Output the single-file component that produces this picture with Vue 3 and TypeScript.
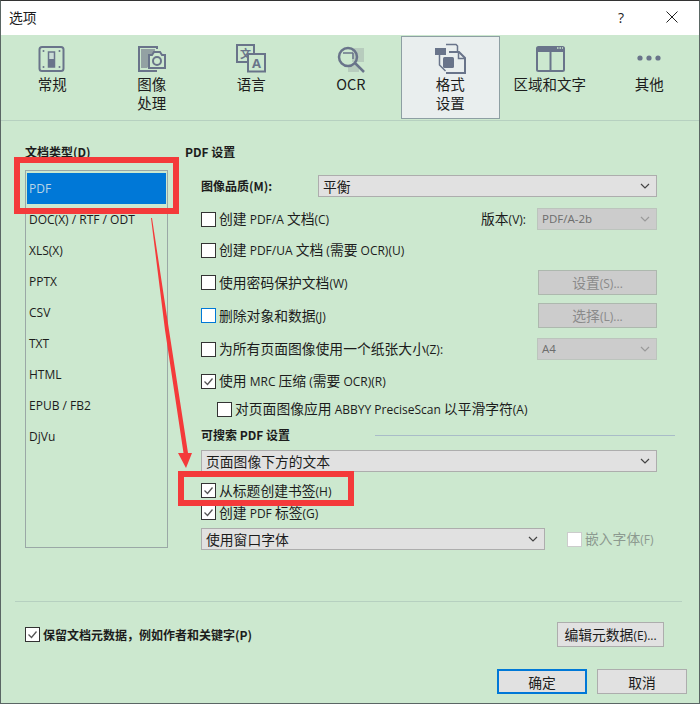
<script setup lang="ts">
const docTypes: string[] = ['DOC(X) / RTF / ODT', 'XLS(X)', 'PPTX', 'CSV', 'TXT', 'HTML', 'EPUB / FB2', 'DjVu']
</script>

<template>
  <div class="window">
    <header class="title">
      <span>选项</span>
      <div class="title-actions">
        <span class="help">?</span>
        <svg class="close" width="12" height="12" viewBox="0 0 12 12"><path d="M.5.5l11 11M11.5.5l-11 11" stroke="#222" fill="none" /></svg>
      </div>
    </header>

    <nav class="tabs">
      <div class="tab">
        <svg class="icon" viewBox="0 0 32 32" fill="none" stroke="#69748a" stroke-width="2">
          <rect x="3.5" y="4" width="24" height="24" rx="2.5" />
          <rect x="12.5" y="9" width="6" height="15" fill="#c9dcd5" stroke-width="1.5" />
          <rect x="13" y="16" width="5" height="8" fill="#69748a" stroke="none" />
          <g fill="#69748a" stroke="none"><circle cx="7.5" cy="8" r="1" /><circle cx="23.5" cy="8" r="1" /><circle cx="7.5" cy="24" r="1" /><circle cx="23.5" cy="24" r="1" /></g>
        </svg>
        <span>常规</span>
      </div>
      <div class="tab">
        <svg class="icon" viewBox="0 0 32 32" fill="none" stroke="#69748a" stroke-width="2">
          <path d="M21 6V4H3v24h18" />
          <path d="M5 6h14v5h-5v11l-3 3H5z" fill="#93a1a3" stroke="none" />
          <path d="M13 12h3l2-3h6l2 3h3v13H13z" fill="#cce8cf" />
          <circle cx="21" cy="18" r="4" />
        </svg>
        <span>图像<br />处理</span>
      </div>
      <div class="tab">
        <svg class="icon" viewBox="0 0 32 32" fill="none" stroke="#69748a" stroke-width="2">
          <rect x="2" y="2" width="17" height="17" />
          <text x="10.5" y="15" class="ig" text-anchor="middle">文</text>
          <rect x="13" y="11" width="17" height="17.500" fill="#cce8cf" />
          <text x="21.500" y="25" class="ia" text-anchor="middle">A</text>
        </svg>
        <span>语言</span>
      </div>
      <div class="tab">
        <svg class="icon" viewBox="0 0 32 32" fill="none" stroke="#69748a" stroke-width="2.500">
          <rect x="17" y="5" width="12" height="14" fill="#b7ccbd" stroke="none" />
          <rect x="13" y="22" width="11" height="7" fill="#b7ccbd" stroke="none" />
          <circle cx="13" cy="14" r="9" />
          <path d="M8 10h10M18 10v6" stroke-width="1.500" />
          <path d="M20 20l9 9" />
        </svg>
        <span>OCR</span>
      </div>
      <div class="tab active">
        <svg class="icon" viewBox="0 0 32 32" fill="none" stroke="#69748a" stroke-width="2">
          <path d="M12 1.500h10l1.500 1.500v5" stroke-width="1.500" />
          <path d="M5.500 12v10l6 6" stroke-width="1.500" />
          <rect x="1" y="5" width="11" height="7" fill="#69748a" stroke="none" />
          <path d="M15 9h10l6 6v15H12" fill="#e9eeee" />
          <path d="M24.500 9v6.500h6.500" stroke-width="1.500" />
          <rect x="9" y="14" width="11" height="11" rx="1.500" fill="#69748a" stroke="none" />
        </svg>
        <span>格式<br />设置</span>
      </div>
      <div class="tab">
        <svg class="icon" viewBox="0 0 32 32" fill="none" stroke="#69748a" stroke-width="2">
          <rect x="3" y="4" width="27" height="24" rx="1.500" />
          <path d="M3 7h27" stroke-width="4" />
          <path d="M16.500 8v20" />
          <path d="M23 5h6" stroke="#cce8cf" stroke-width="1.500" stroke-dasharray="1.500 1" />
        </svg>
        <span>区域和文字</span>
      </div>
      <div class="tab">
        <svg class="icon" viewBox="0 0 32 32" fill="#69748a">
          <circle cx="7" cy="15" r="2.600" /><circle cx="16" cy="15" r="2.600" /><circle cx="25" cy="15" r="2.600" />
        </svg>
        <span>其他</span>
      </div>
    </nav>

    <main class="body">
      <section class="left">
        <h3 class="heading">文档类型(D)</h3>
        <div class="list">
          <div class="item selected la">PDF</div>
          <div v-for="d in docTypes" :key="d" class="item la">{{ d }}</div>
        </div>
      </section>

      <section class="right">
        <h3 class="heading">PDF 设置</h3>
        <div class="rows">
          <div class="row mt14">
            <label class="field-label bold">图像品质(M):</label>
            <div class="select grow"><span>平衡</span><svg class="chev" viewBox="0 0 10 6"><path d="M1 1l4 4 4-4" /></svg></div>
          </div>
          <div class="row mt11">
            <span class="check"></span><span>创建 <span class="la">PDF/A</span> 文档<span class="la">(C)</span></span>
            <span class="end-label">版本<span class="la">(V):</span></span>
            <div class="select off small"><span class="la">PDF/A-2b</span><svg class="chev" viewBox="0 0 10 6"><path d="M1 1l4 4 4-4" /></svg></div>
          </div>
          <div class="row mt9">
            <span class="check"></span><span>创建 <span class="la">PDF/UA</span> 文档 <span class="la">(</span>需要 <span class="la">OCR)(U)</span></span>
          </div>
          <div class="row tall mt9">
            <span class="check"></span><span>使用密码保护文档<span class="la">(W)</span></span>
            <button class="btn off end">设置<span class="la">(S)...</span></button>
          </div>
          <div class="row tall mt8">
            <span class="check focus"></span><span>删除对象和数据<span class="la">(J)</span></span>
            <button class="btn off end">选择<span class="la">(L)...</span></button>
          </div>
          <div class="row mt10">
            <span class="check"></span><span>为所有页面图像使用一个纸张大小<span class="la">(Z):</span></span>
            <div class="select off small end"><span class="la">A4</span><svg class="chev" viewBox="0 0 10 6"><path d="M1 1l4 4 4-4" /></svg></div>
          </div>
          <div class="row mt10">
            <span class="check on"><svg viewBox="0 0 13 13"><path d="M2.500 6.500l3 3 5-6" /></svg></span><span>使用 <span class="la">MRC</span> 压缩 <span class="la">(</span>需要 <span class="la">OCR)(R)</span></span>
          </div>
          <div class="row sub mt6">
            <span class="check"></span><span>对页面图像应用 <span class="la">ABBYY PreciseScan</span> 以平滑字符<span class="la">(A)</span></span>
          </div>
          <div class="section mt6">
            <span class="section-title bold">可搜索 PDF 设置</span>
            <span class="rule"></span>
          </div>
          <div class="row mt6">
            <div class="select grow lift"><span>页面图像下方的文本</span><svg class="chev" viewBox="0 0 10 6"><path d="M1 1l4 4 4-4" /></svg></div>
          </div>
          <div class="row mt7">
            <span class="check on"><svg viewBox="0 0 13 13"><path d="M2.500 6.500l3 3 5-6" /></svg></span><span class="drop">从标题创建书签<span class="la">(H)</span></span>
          </div>
          <div class="row">
            <span class="check on"><svg viewBox="0 0 13 13"><path d="M2.500 6.500l3 3 5-6" /></svg></span><span class="drop">创建 <span class="la">PDF</span> 标签<span class="la">(G)</span></span>
          </div>
          <div class="row mt5">
            <div class="select font"><span>使用窗口字体</span><svg class="chev" viewBox="0 0 10 6"><path d="M1 1l4 4 4-4" /></svg></div>
            <span class="check muted"></span><span class="muted-text">嵌入字体<span class="la">(F)</span></span>
          </div>
        </div>
      </section>
    </main>

    <div class="divider"></div>

    <div class="meta">
      <span class="check on"><svg viewBox="0 0 13 13"><path d="M2.500 6.500l3 3 5-6" /></svg></span>
      <span class="bold small-bold">保留文档元数据，例如作者和关键字(P)</span>
      <button class="btn edit">编辑元数据<span class="la">(E)...</span></button>
    </div>

    <footer class="foot">
      <button class="btn primary">确定</button>
      <button class="btn cancel">取消</button>
    </footer>

    <svg class="marks" width="700" height="704" viewBox="0 0 700 704">
      <rect x="17" y="160" width="159" height="51" fill="none" stroke="#f43a3a" stroke-width="6" />
      <rect x="181" y="474" width="170" height="29" fill="none" stroke="#f43a3a" stroke-width="6" />
      <path d="M151 218H152L169 330L188 453H192L186 468L178 453H183.500L165 330Z" fill="#f43a3a" />
    </svg>
  </div>
</template>

<style>
html, body { margin: 0; padding: 0; }
</style>

<style scoped>
.window {
  position: relative;
  box-sizing: border-box;
  width: 700px;
  height: 704px;
  background: #cce8cf;
  border: 1px solid #5a6664;
  border-top-color: #333;
  font: 13.800px/18px "Noto Sans CJK SC", "Noto Sans", sans-serif;
  color: #1c1c1c;
  overflow: hidden;
}
.la { font-family: "Open Sans", "Noto Sans", sans-serif; font-size: 12px; }
.bold { font-weight: 700; font-size: 12px; }
.drop { padding-top: 2px; }
.lift { padding-bottom: 2px; }
.title {
  box-sizing: border-box;
  height: 34px;
  background: #fff;
  display: flex;
  align-items: center;
  justify-content: space-between;
  padding: 0 0 2px 8px;
}
.title-actions { display: flex; align-items: center; }
.help { font: 14px "Open Sans", sans-serif; margin-right: 42px; }
.close { margin-right: 21px; }
.tabs {
  height: 86px;
  box-sizing: border-box;
  display: flex;
  padding: 1px 0 0 1.500px;
  border-bottom: 1px solid #b6d0c0;
}
.tab {
  box-sizing: border-box;
  width: 99.500px;
  height: 83px;
  display: flex;
  flex-direction: column;
  align-items: center;
  padding-top: 6px;
  font-size: 14.500px;
  line-height: 18.500px;
  text-align: center;
  border: 1px solid transparent;
}
.tab.active { background: #e9eeee; border-color: #8d9fa3; }
.icon { width: 32px; height: 32px; flex: none; }
.ig { font: 11px "Noto Sans CJK SC", sans-serif; fill: #69748a; stroke: none; font-weight: 700; }
.ia { font: 700 13px "Open Sans", sans-serif; fill: #69748a; stroke: none; }
.body { display: flex; height: 480px; padding: 0 0 0 24px; }
.left { width: 160px; flex: none; }
.heading { margin: 22px 0 0; font-size: 12px; line-height: 18px; font-weight: 700; }
.list {
  box-sizing: border-box;
  width: 143px;
  height: 378px;
  margin-top: 9px;
  border: 1px solid #9aa8a6;
  padding: 2px 1px 1px;
}
.item { height: 31px; line-height: 31px; padding-left: 2px; white-space: nowrap; }
.selected { background: #0078d7; color: #b9d6e6; }
.right { width: 500px; flex: none; }
.rows { padding-left: 16px; width: 456px; }
.row { display: flex; align-items: center; height: 22px; white-space: nowrap; }
.row.tall { height: 25px; }
.row.sub { padding-left: 16px; }
.mt5 { margin-top: 5px; } .mt6 { margin-top: 6px; } .mt7 { margin-top: 7px; } .mt8 { margin-top: 8px; }
.mt9 { margin-top: 9px; } .mt10 { margin-top: 10px; } .mt11 { margin-top: 11px; } .mt14 { margin-top: 14px; }
.field-label { width: 117px; flex: none; }
.check {
  box-sizing: border-box;
  flex: none;
  width: 15px;
  height: 15px;
  margin-right: 3px;
  background: #fff;
  border: 1px solid #333;
  display: flex;
}
.check svg { width: 13px; height: 13px; fill: none; stroke: #555; stroke-width: 1.300; }
.check.focus { border-color: #0078d7; }
.check.muted { border-color: #ccc; margin-left: 22px; }
.muted-text { color: #8c9a90; }
.select {
  box-sizing: border-box;
  height: 22px;
  background: #e1e1e1;
  border: 1px solid #adadad;
  display: flex;
  align-items: center;
  justify-content: space-between;
  padding: 0 6px 0 4px;
}
.select.grow { flex: 1; }
.select.font { width: 344px; }
.select.off { background: #ccc; border-color: #bcc4bd; color: #6d6d6d; }
.select.off .la { font-size: 11.500px; }
.select.small { width: 120px; margin-left: auto; }
.select.off .chev path { stroke: #9a9a9a; }
.end-label { margin-left: auto; margin-right: 11px; }
.select.small:not(.end) { margin-left: 0; }
.chev { width: 10px; height: 6px; }
.chev path { fill: none; stroke: #444; stroke-width: 1.200; }
.section { display: flex; align-items: center; height: 18px; }
.section-title { width: 174px; }
.rule { flex: 1; height: 1px; background: #a9bcc8; margin-right: -18px; }
.btn {
  box-sizing: border-box;
  font: inherit;
  color: inherit;
  padding: 0;
  background: #e1e1e1;
  border: 1px solid #adadad;
  height: 25px;
}
.btn.off { width: 119px; background: #ccc; color: #8a8a8a; border: 1px solid #f0f5f0; outline: 1px solid #adb8ae; outline-offset: -1px; }
.btn.end { margin-left: auto; }
.divider { height: 1px; background: #b6d0c0; margin: 0 17px 0 14px; }
.meta { display: flex; align-items: center; height: 25px; margin-top: 20px; padding: 0 35px 0 24px; }
.edit { margin-left: auto; width: 107px; }
.foot { display: flex; justify-content: flex-end; gap: 10px; margin-top: 22px; padding-right: 12px; }
.foot .btn { width: 90px; height: 25px; }
.primary { border: 2px solid #0078d7; }
.marks { position: absolute; left: -1px; top: -1px; pointer-events: none; }
</style>
